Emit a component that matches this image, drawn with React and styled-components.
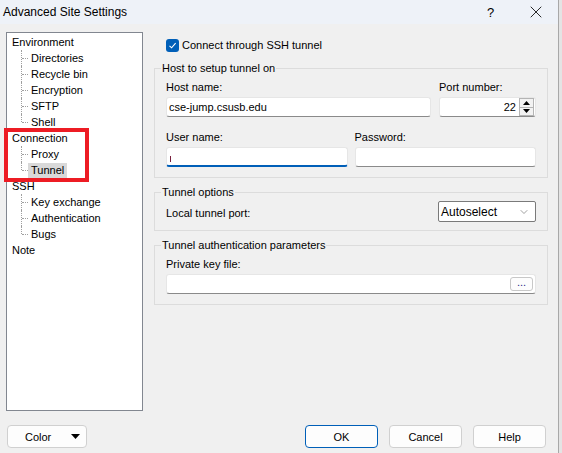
import React from "react";
import styled, { createGlobalStyle } from "styled-components";
import { X, ChevronDown } from "lucide-react";

const GlobalStyle = createGlobalStyle`
  html, body {
    margin: 0;
    padding: 0;
    background: #e4e4e4;
  }
  * {
    box-sizing: border-box;
  }
`;

const FONT = `"Segoe UI", "Liberation Sans", Arial, sans-serif`;

const treeItems = [
  { label: "Environment" },
  { label: "Directories", child: true },
  { label: "Recycle bin", child: true },
  { label: "Encryption", child: true },
  { label: "SFTP", child: true },
  { label: "Shell", child: true, last: true },
  { label: "Connection" },
  { label: "Proxy", child: true },
  { label: "Tunnel", child: true, last: true, selected: true },
  { label: "SSH" },
  { label: "Key exchange", child: true },
  { label: "Authentication", child: true },
  { label: "Bugs", child: true, last: true },
  { label: "Note" },
];

const App = () => {
  return (
    <>
      <GlobalStyle />
      <Window>
        <TitleBar>
          <TitleText>Advanced Site Settings</TitleText>
          <TitleButton>?</TitleButton>
          <TitleButton>
            <X size={20} strokeWidth={1} />
          </TitleButton>
        </TitleBar>

        <Main>
          <Tree>
            {treeItems.map((item) => (
              <TreeRow key={item.label} $child={item.child} $last={item.last}>
                <TreeLabel $selected={item.selected}>{item.label}</TreeLabel>
              </TreeRow>
            ))}
            <Annotation />
          </Tree>

          <Content>
            <CheckRow>
              <CheckBox>
                <svg width="9" height="9" viewBox="0 0 9 9">
                  <path d="M1.5 4.8 L3.6 6.8 L7.6 2.2" fill="none" stroke="#fff" strokeWidth="1.1" />
                </svg>
              </CheckBox>
              <span>Connect through SSH tunnel</span>
            </CheckRow>

            <Group>
              <Legend>Host to setup tunnel on</Legend>
              <FieldRow $cols="1fr 97px" $gap={8}>
                <Field>
                  <Label>Host name:</Label>
                  <TextBox>cse-jump.csusb.edu</TextBox>
                </Field>
                <Field>
                  <Label>Port number:</Label>
                  <TextBox $align="flex-end">
                    <span>22</span>
                    <Spinner>
                      <SpinButton>
                        <svg width="7" height="4" viewBox="0 0 7 4"><polygon points="0,4 7,4 3.5,0" fill="#000" /></svg>
                      </SpinButton>
                      <SpinButton>
                        <svg width="7" height="4" viewBox="0 0 7 4"><polygon points="0,0 7,0 3.5,4" fill="#000" /></svg>
                      </SpinButton>
                    </Spinner>
                  </TextBox>
                </Field>
              </FieldRow>
              <FieldRow $cols="1fr 1fr" $gap={7} $top={9}>
                <Field>
                  <Label>User name:</Label>
                  <TextBox $focused>
                    <Caret />
                  </TextBox>
                </Field>
                <Field>
                  <Label>Password:</Label>
                  <TextBox />
                </Field>
              </FieldRow>
            </Group>

            <Group $bottom={8}>
              <Legend>Tunnel options</Legend>
              <OptionRow>
                <span>Local tunnel port:</span>
                <Select>
                  <span>Autoselect</span>
                  <ChevronDown size={12} strokeWidth={1.2} color="#606060" />
                </Select>
              </OptionRow>
            </Group>

            <Group>
              <Legend>Tunnel authentication parameters</Legend>
              <Field>
                <Label>Private key file:</Label>
                <TextBox $align="flex-end">
                  <BrowseButton>...</BrowseButton>
                </TextBox>
              </Field>
            </Group>
          </Content>
        </Main>

        <Footer>
          <DropButton>
            <span>Color</span>
            <svg width="9" height="5" viewBox="0 0 9 5"><polygon points="0,0 9,0 4.5,5" fill="#000" /></svg>
          </DropButton>
          <Button $primary>OK</Button>
          <Button>Cancel</Button>
          <Button>Help</Button>
        </Footer>
      </Window>
    </>
  );
};

export default App;

const Window = styled.div`
  width: 559px;
  height: 453px;
  display: flex;
  flex-direction: column;
  background: #f0f0f0;
  border-right: 1px solid #a8a8a8;
  font-family: ${FONT};
  font-size: 11px;
  color: #000;
`;

const TitleBar = styled.div`
  height: 24px;
  flex: none;
  display: flex;
  align-items: center;
  background: #eef2f8;
  padding-left: 3px;
  font-size: 12px;
`;

const TitleText = styled.div`
  flex: 1;
`;

const TitleButton = styled.div`
  width: 45px;
  height: 24px;
  display: flex;
  align-items: center;
  justify-content: center;
  font-size: 13px;
`;

const Main = styled.div`
  flex: 1;
  display: flex;
  gap: 11px;
  padding: 8px 0 0 6px;
  min-height: 0;
`;

const Tree = styled.div`
  position: relative;
  width: 137px;
  background: #fff;
  border: 1px solid #828790;
  padding-top: 1px;
`;

const TreeRow = styled.div`
  position: relative;
  height: 16px;
  display: flex;
  align-items: center;
  padding-left: ${(p) => (p.$child ? 21 : 2)}px;

  ${(p) =>
    p.$child &&
    `
    &::before {
      content: "";
      position: absolute;
      left: 14px;
      top: 0;
      height: ${p.$last ? "8px" : "16px"};
      border-left: 1px dotted #a0a0a0;
    }
    &::after {
      content: "";
      position: absolute;
      left: 15px;
      top: 8px;
      width: 6px;
      border-top: 1px dotted #a0a0a0;
    }
  `}
`;

const TreeLabel = styled.span`
  line-height: 15px;
  padding: 0 3px;
  background: ${(p) => (p.$selected ? "#d9d9d9" : "transparent")};
`;

const Annotation = styled.div`
  position: absolute;
  left: -3px;
  top: 95px;
  width: 85px;
  height: 54px;
  border: 4px solid #ed1c24;
  pointer-events: none;
`;

const Content = styled.div`
  width: 394px;
  display: flex;
  flex-direction: column;
`;

const CheckRow = styled.div`
  height: 16px;
  display: flex;
  align-items: center;
  gap: 3px;
  margin: 5px 0 7px 12px;
`;

const CheckBox = styled.div`
  width: 13px;
  height: 13px;
  border-radius: 3px;
  background: #005fb8;
  display: flex;
  align-items: center;
  justify-content: center;
`;

const Group = styled.fieldset`
  margin: 0 0 6px;
  min-width: 0;
  border: 1px solid #dcdcdc;
  padding: 0 11px ${(p) => p.$bottom ?? 10}px;
`;

const Legend = styled.legend`
  padding: 0 1px;
  margin-left: -5px;
  line-height: 16px;
`;

const FieldRow = styled.div`
  display: grid;
  grid-template-columns: ${(p) => p.$cols};
  column-gap: ${(p) => p.$gap}px;
  margin-top: ${(p) => p.$top ?? 0}px;
`;

const Field = styled.div`
  display: flex;
  flex-direction: column;
`;

const Label = styled.div`
  line-height: 16px;
  margin: 3px 0 2px;
`;

const TextBox = styled.div`
  height: 20px;
  display: flex;
  align-items: center;
  justify-content: ${(p) => p.$align ?? "flex-start"};
  gap: 3px;
  background: #fff;
  border: 1px solid #e6e6e6;
  border-bottom: ${(p) => (p.$focused ? "2px solid #005fb8" : "1px solid #8a8a8a")};
  border-radius: 3px;
  padding: 0 1px 0 2px;
`;

const Caret = styled.span`
  width: 1px;
  height: 6px;
  margin-left: 1px;
  margin-top: 4px;
  background: #7a1f3d;
`;

const Spinner = styled.div`
  display: flex;
  flex-direction: column;
  width: 15px;
  height: 18px;
`;

const SpinButton = styled.div`
  flex: 1;
  display: flex;
  align-items: center;
  justify-content: center;
  background: #f2f2f2;
  border: 1px solid #b4b4b4;

  & + & {
    border-top: none;
  }
`;

const OptionRow = styled.div`
  display: flex;
  align-items: center;
  justify-content: space-between;
  margin-top: 1px;

  & > span {
    padding-top: 3px;
  }
`;

const Select = styled.div`
  width: 98px;
  height: 21px;
  display: flex;
  align-items: center;
  justify-content: space-between;
  background: #fff;
  border: 1px solid #7a7a7a;
  border-radius: 2px;
  padding: 0 5px 0 2px;
  font-size: 12px;
`;

const BrowseButton = styled.div`
  width: 23px;
  height: 14px;
  margin-right: 1px;
  border: 1px solid #c8c8c8;
  border-radius: 3px;
  background: #fdfdfd;
  color: #2b2b8a;
  font-size: 11px;
  line-height: 8px;
  text-align: center;
`;

const Footer = styled.div`
  height: 42px;
  flex: none;
  display: flex;
  align-items: flex-start;
  gap: 11px;
  padding: 14px 12px 0 7px;

  & > :nth-child(2) {
    margin-left: auto;
  }
`;

const Button = styled.button`
  width: 73px;
  height: 23px;
  padding: 0;
  font-family: ${FONT};
  font-size: 11px;
  color: #000;
  background: #fdfdfd;
  border: 1px solid ${(p) => (p.$primary ? "#005fb8" : "#d0d0d0")};
  border-radius: 4px;
`;

const DropButton = styled(Button)`
  width: 80px;
  display: flex;
  align-items: center;
  justify-content: space-between;
  padding: 0 6px 0 17px;
`;
